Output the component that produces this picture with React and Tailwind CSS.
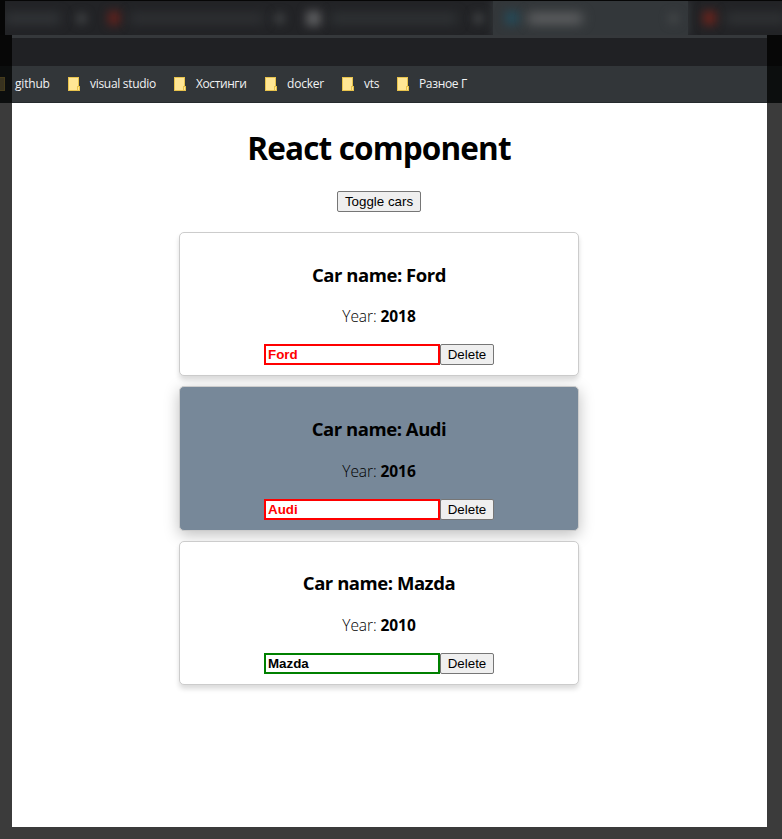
const cars = [
  { name: 'Ford', year: 2018, field: 'border-[#ff0000] text-[#ff0000]', card: 'bg-white shadow-[0_4px_5px_0_rgba(0,0,0,0.14)]' },
  { name: 'Audi', year: 2016, field: 'border-[#ff0000] text-[#ff0000]', card: 'bg-[#778899] shadow-[0_4px_15px_0_rgba(0,0,0,0.25)]' },
  { name: 'Mazda', year: 2010, field: 'border-[#008000] text-black', card: 'bg-white shadow-[0_4px_5px_0_rgba(0,0,0,0.14)]' },
];

const bookmarks = [
  { name: 'github', width: 'w-[53px] tracking-[-0.2px]' },
  { name: 'visual studio', width: 'w-[84px] tracking-[-0.3px]' },
  { name: 'Хостинги', width: 'w-[69px] tracking-[-0.4px]' },
  { name: 'docker', width: 'w-[55px] tracking-[-0.2px]' },
  { name: 'vts', width: 'w-[33px] tracking-[-0.2px]' },
  { name: 'Разное Г', width: 'w-[60px] tracking-[-0.35px]' },
];

function Folder() {
  return (
    <svg className="h-[14px] w-[12px] shrink-0" viewBox="0 0 12 14">
      <path d="M0 0h11v9h1v5H0z" fill="#e8c34c" />
      <path d="M1 1h9v8H9v4H1z" fill="#ffe694" />
      <path d="M10 10h1v3h-1z" fill="#ffe694" />
    </svg>
  );
}

function Tab({ className, icon, label, close }) {
  return (
    <div className={'flex h-full shrink-0 items-center ' + className}>
      <div className={'shrink-0 blur-[5px] ' + icon} />
      <div className={'h-[9px] shrink-0 blur-[6px] ' + label} />
      {close && <div className="ml-auto mr-[10px] h-[9px] w-[9px] bg-[#46494b] blur-[5px]" />}
    </div>
  );
}

function Button({ children, className }) {
  return (
    <button className={'h-[21px] rounded-[2px] border border-[#767676] bg-[#efefef] text-[13.333px] leading-[17px] text-black ' + className}>
      {children}
    </button>
  );
}

function Car({ car }) {
  return (
    <div className={'flex h-[144.44px] w-[400px] flex-col items-center rounded-[5px] border border-[#cccccc] ' + car.card}>
      <h3 className="mt-[28.55px] h-[26px] whitespace-nowrap font-['Open_Sans','Noto_Sans',sans-serif] text-[18.5px] font-bold leading-[26px] tracking-[-0.46px]">
        Car name: {car.name}
      </h3>
      <p className="mt-[17.75px] h-[22px] whitespace-nowrap font-['Open_Sans','Noto_Sans',sans-serif] text-[15.5px] font-light leading-[22px] tracking-[-0.07px]">
        Year: <strong className="font-bold">{car.year}</strong>
      </p>
      <div className="mt-[17px] flex font-['Liberation_Sans',Arial,sans-serif]">
        <input
          readOnly
          value={car.name}
          className={'h-[21px] w-[176px] border-2 bg-white px-[2px] text-[13.333px] font-bold leading-[15px] outline-none ' + car.field}
        />
        <Button className="w-[54px]">Delete</Button>
      </div>
    </div>
  );
}

export default function App() {
  return (
    <div className="flex h-[839px] w-[782px] flex-col overflow-hidden bg-[#3b3b3b]">
      <div className="h-[35px] bg-[#060606] pl-[5px] pt-[1px]">
        <div className="flex h-[34px] overflow-hidden bg-[#222326]">
          <Tab className="w-[91px]" icon="w-0" label="w-[55px] bg-[#36393c]" close />
          <Tab className="w-[198px] pl-[12px]" icon="h-[14px] w-[12px] bg-[#61221d]" label="ml-[10px] w-[134px] bg-[#313336]" close />
          <Tab className="w-[199px] pl-[12px]" icon="h-[15px] w-[15px] bg-[#5c5d5f]" label="ml-[10px] w-[126px] bg-[#323638]" close />
          <Tab className="w-[195px] bg-[#33373a] pl-[12px] shadow-[0_0_8px_1px_#33373a]" icon="h-[14px] w-[14px] bg-[#264957]" label="ml-[9px] w-[54px] bg-[#6a6b6c]" close />
          <Tab className="w-[94px] pl-[15px]" icon="h-[14px] w-[13px] bg-[#68241d]" label="ml-[10px] w-[60px] bg-[#333638]" />
        </div>
      </div>
      <div className="flex h-[68px]">
        <div className="flex w-[12px] shrink-0 flex-col">
          <div className="h-[31px] bg-[#070707]" />
          <div className="h-[37px] bg-[#0c0e0e] pt-[11px]">
            <div className="h-[14px] w-[5px] border-y border-r border-[#463c1b] bg-[#38321f]" />
          </div>
        </div>
        <div className="flex w-[755px] shrink-0 flex-col">
          <div className="h-[3px] bg-[#35383b]" />
          <div className="h-[28px] bg-[#202124]" />
          <div className="flex h-[37px] items-center border-b border-[#252a2d] bg-[#323639] pl-[3px]">
            {bookmarks.map((item, index) => (
              <div key={item.name} className="flex items-center">
                {index > 0 && <Folder />}
                <span className={"shrink-0 whitespace-nowrap font-['Open_Sans','Noto_Sans',sans-serif] text-[12px] font-medium leading-[18px] text-[#f1f2f3] " + item.width + (index > 0 ? ' ml-[10px]' : '')}>
                  {item.name}
                </span>
              </div>
            ))}
          </div>
        </div>
        <div className="flex w-[15px] shrink-0 flex-col">
          <div className="h-[31px] bg-[#070707]" />
          <div className="h-[37px] bg-[#0c0e0e]" />
        </div>
      </div>
      <main className="ml-[12px] flex h-[724px] w-[755px] flex-col items-center bg-white pr-[21px] text-black">
        <h1 className="mt-[23px] h-[44px] whitespace-nowrap font-['Open_Sans','Noto_Sans',sans-serif] text-[31.5px] font-bold leading-[44px] tracking-[-0.85px]">
          React component
        </h1>
        <Button className="mt-[21px] w-[84px] font-['Liberation_Sans',Arial,sans-serif]">Toggle cars</Button>
        <div className="mt-[20px] flex flex-col gap-[10px]">
          {cars.map((car) => (
            <Car key={car.name} car={car} />
          ))}
        </div>
      </main>
    </div>
  );
}
